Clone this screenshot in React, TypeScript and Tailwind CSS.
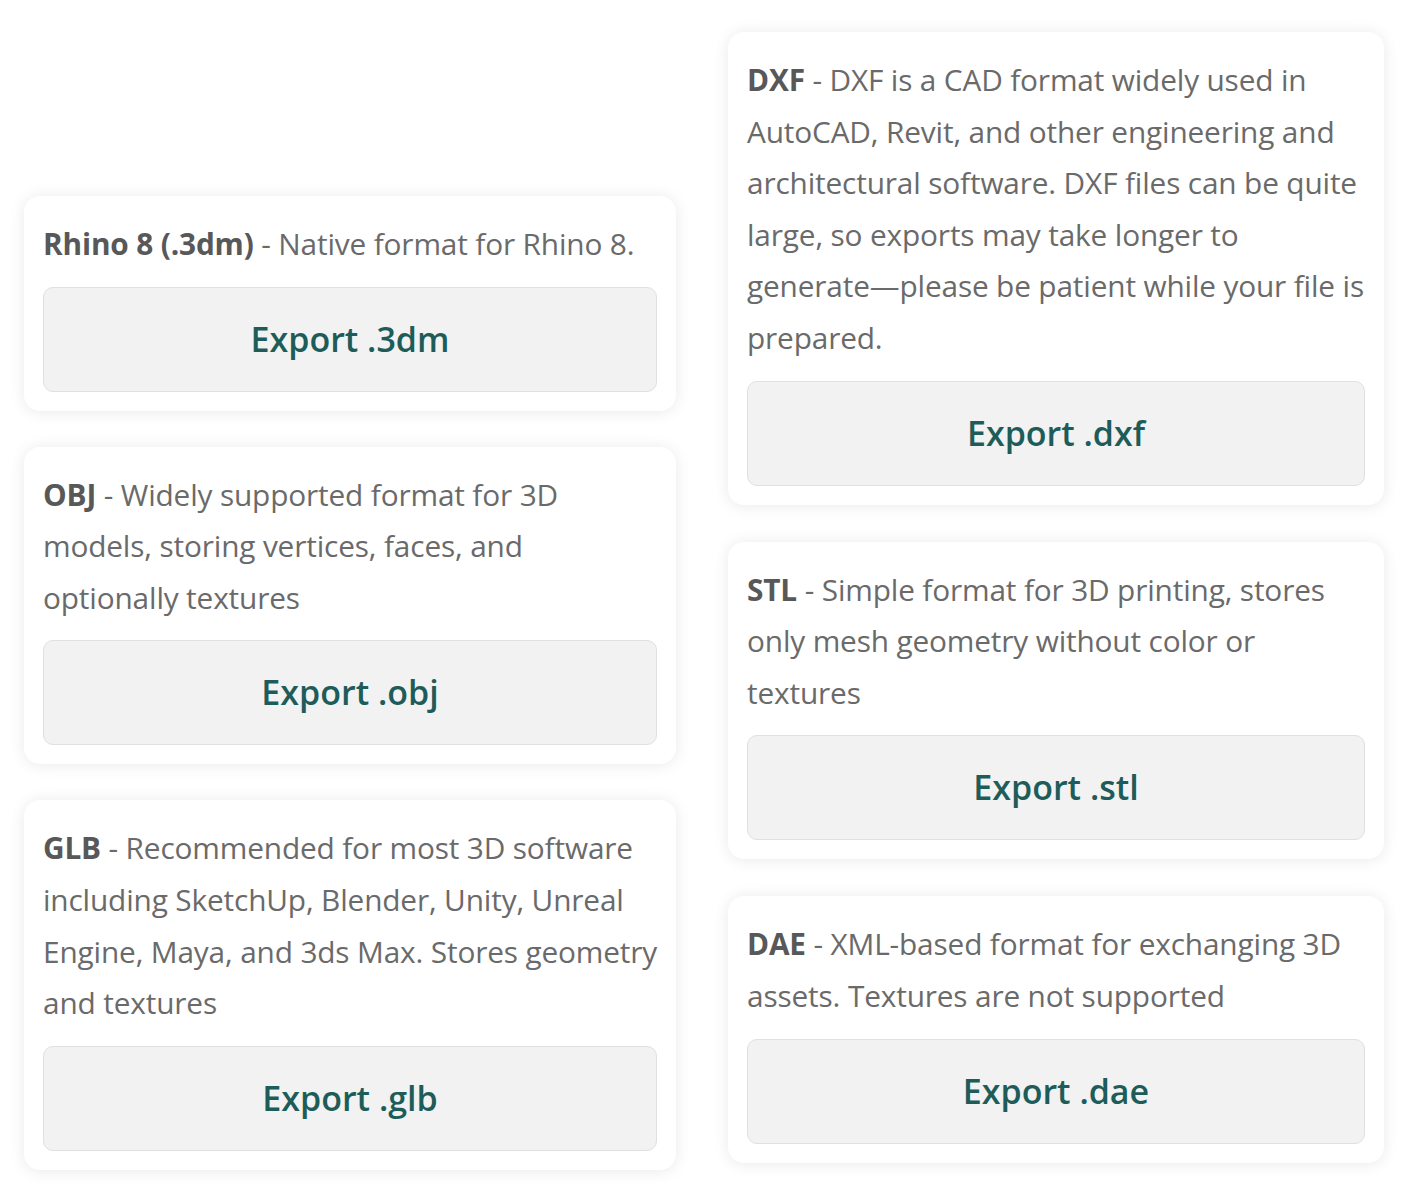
import React from "react";

// lines are split where the design wraps them
type Format = { label: string; lines: string[]; ext: string };

const LEFT: Format[] = [
  { label: "Rhino 8 (.3dm)", lines: ["Native format for Rhino 8."], ext: ".3dm" },
  {
    label: "OBJ",
    lines: ["Widely supported format for 3D", "models, storing vertices, faces, and", "optionally textures"],
    ext: ".obj",
  },
  {
    label: "GLB",
    lines: [
      "Recommended for most 3D software",
      "including SketchUp, Blender, Unity, Unreal",
      "Engine, Maya, and 3ds Max. Stores geometry",
      "and textures",
    ],
    ext: ".glb",
  },
];

const RIGHT: Format[] = [
  {
    label: "DXF",
    lines: [
      "DXF is a CAD format widely used in",
      "AutoCAD, Revit, and other engineering and",
      "architectural software. DXF files can be quite",
      "large, so exports may take longer to",
      "generate\u2014please be patient while your file is",
      "prepared.",
    ],
    ext: ".dxf",
  },
  {
    label: "STL",
    lines: ["Simple format for 3D printing, stores", "only mesh geometry without color or", "textures"],
    ext: ".stl",
  },
  { label: "DAE", lines: ["XML-based format for exchanging 3D", "assets. Textures are not supported"], ext: ".dae" },
];

function FormatCard({ f }: { f: Format }) {
  return (
    <div className="bg-white rounded-2xl px-[19px] pt-[22px] pb-[19px] shadow-[0_1px_16px_rgba(0,0,0,0.09)]">
      <p className="text-[29.8px] leading-[51.6px] text-[#6a6a6a] whitespace-nowrap tracking-[-0.15px]">
        {f.lines.map((line, i) => (
          <span key={i} className="block">
            {i === 0 && (
              <>
                <span className="font-bold text-[#585858]">{f.label}</span> -{" "}
              </>
            )}
            {line}
          </span>
        ))}
      </p>
      <button className="mt-[17px] w-full h-[105px] rounded-[10px] bg-[#f2f2f2] border border-[#e0e0e0] text-[34px] font-semibold text-[#1d5c59]">
        Export {f.ext}
      </button>
    </div>
  );
}

export default function App() {
  return (
    <div className="min-h-screen bg-white" style={{ fontFamily: '"Open Sans", "Noto Sans", sans-serif' }}>
      <div className="flex items-start gap-[52px] pl-[24px] pt-[32px]">
        <div className="w-[652px] mt-[164px] flex flex-col gap-[36px]">
          {LEFT.map((f) => (
            <FormatCard key={f.ext} f={f} />
          ))}
        </div>
        <div className="w-[656px] flex flex-col gap-[37px]">
          {RIGHT.map((f) => (
            <FormatCard key={f.ext} f={f} />
          ))}
        </div>
      </div>
    </div>
  );
}
